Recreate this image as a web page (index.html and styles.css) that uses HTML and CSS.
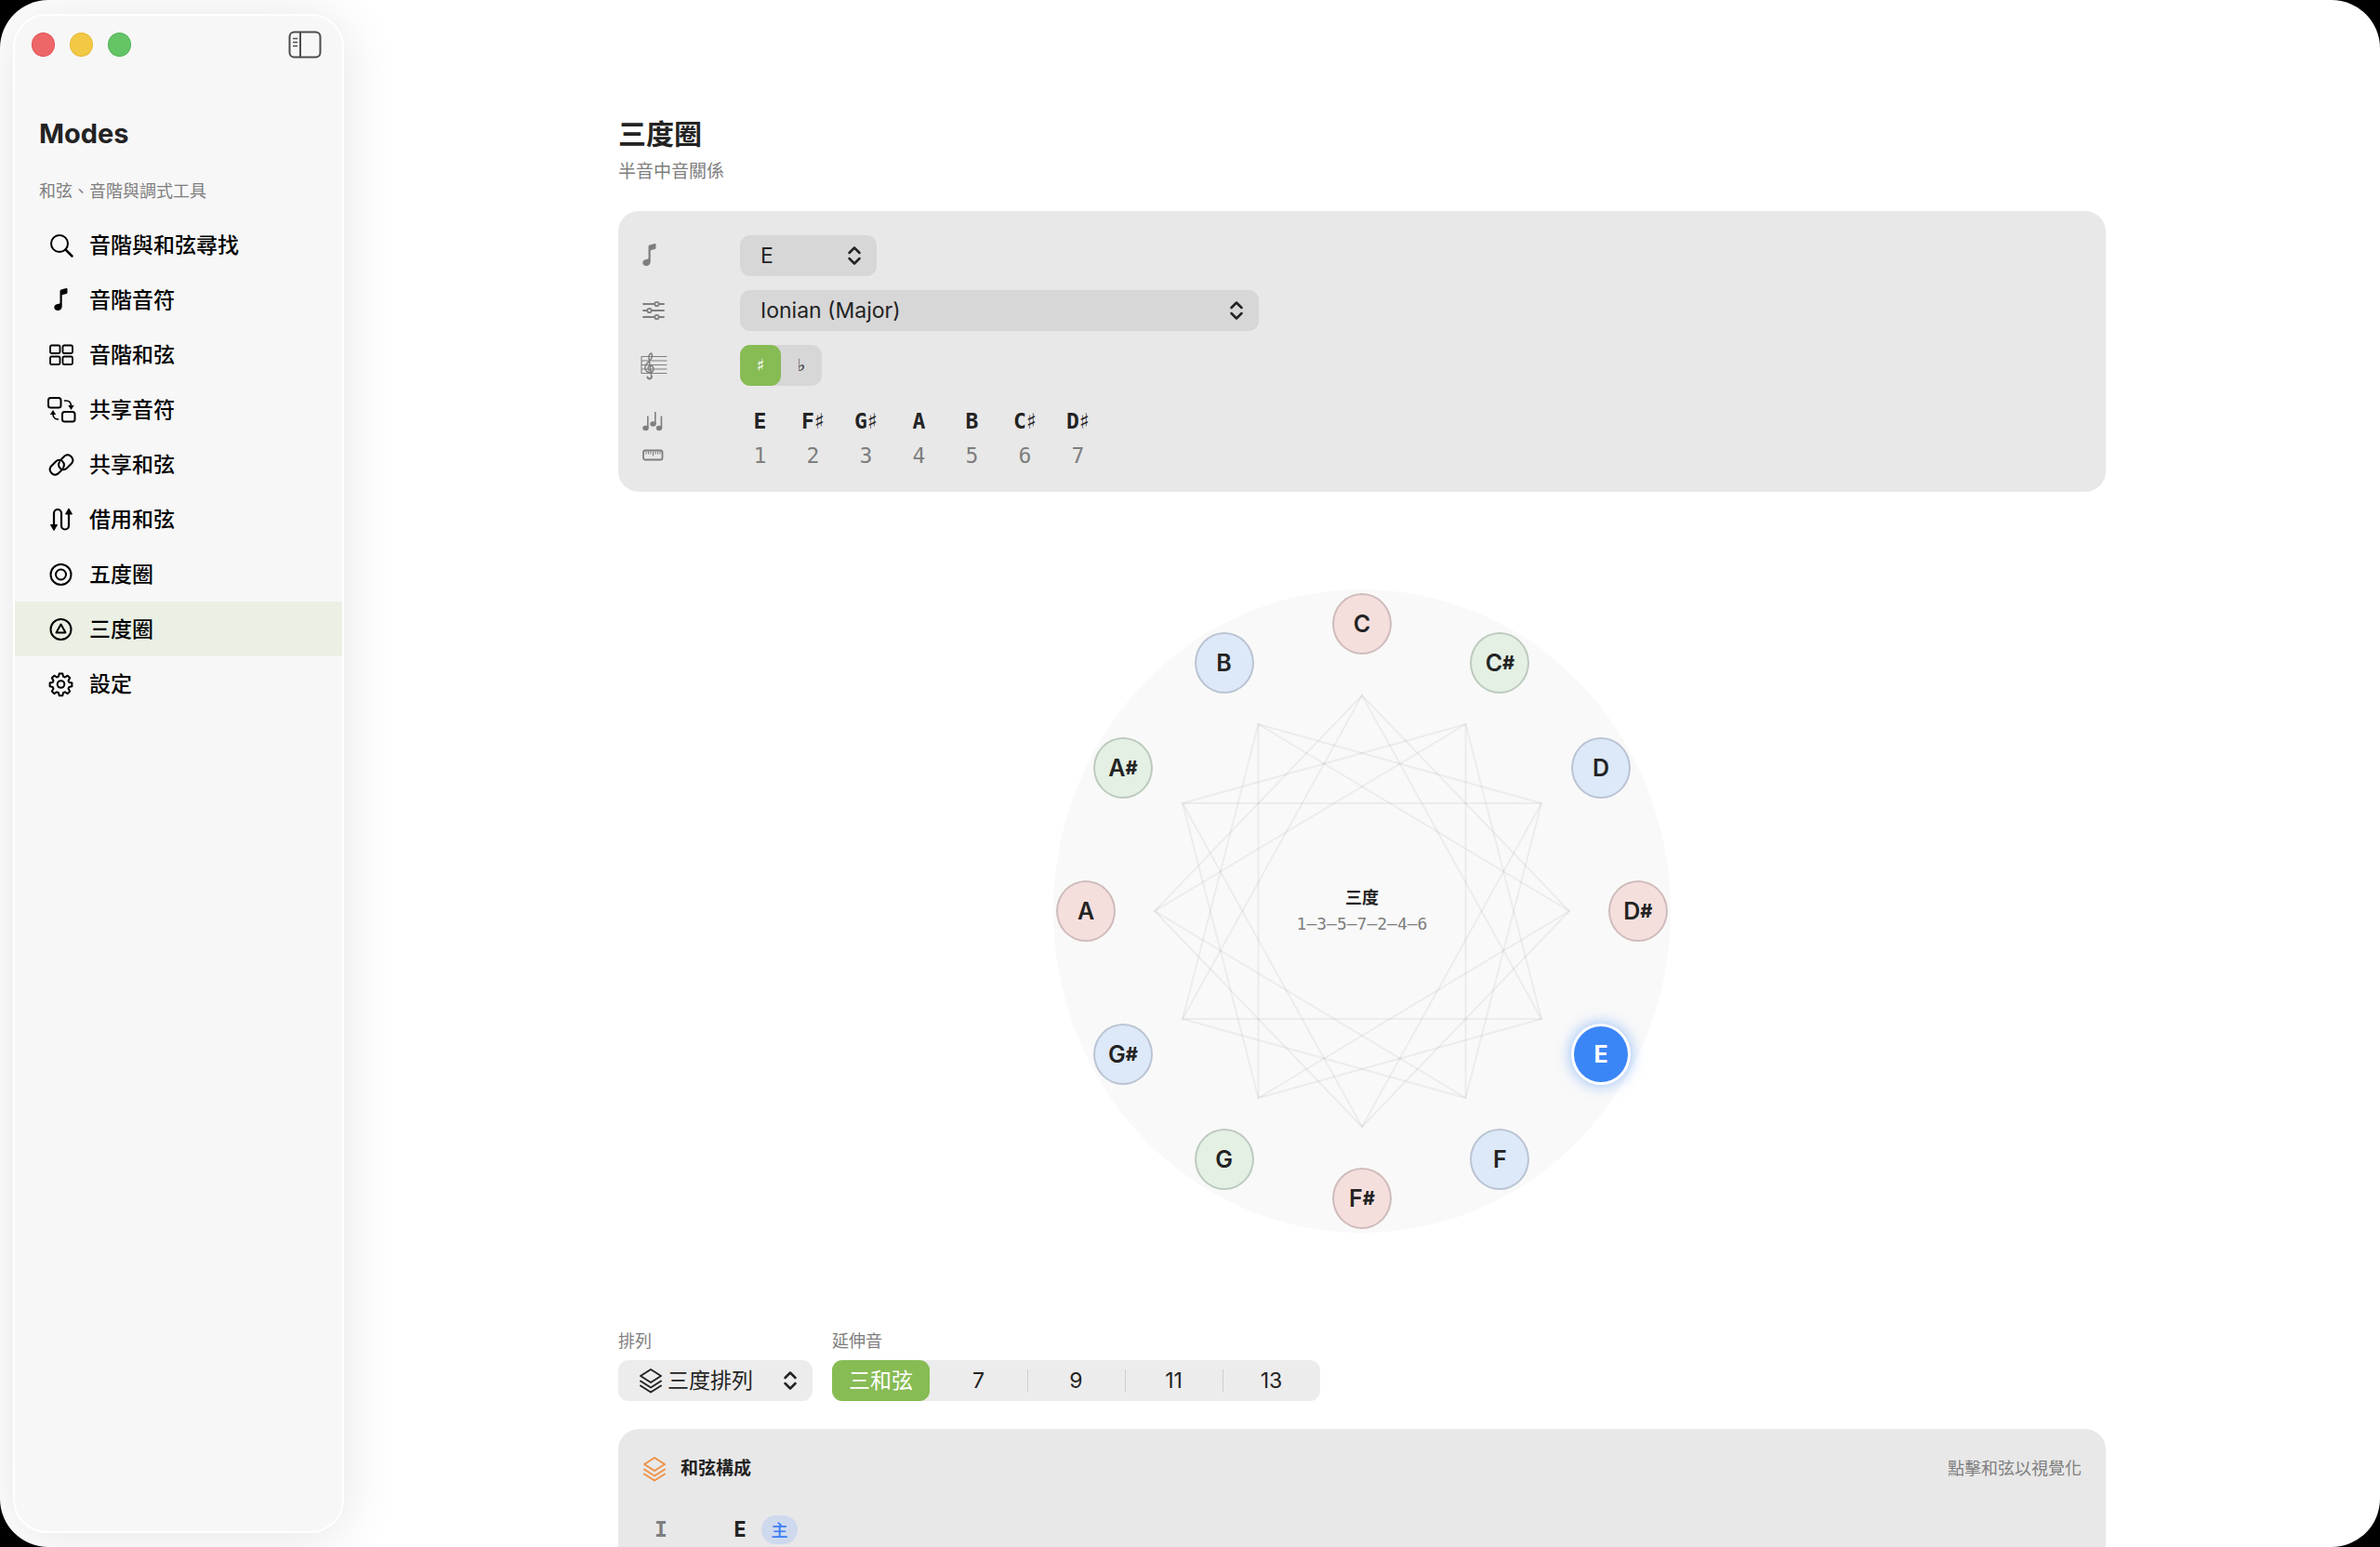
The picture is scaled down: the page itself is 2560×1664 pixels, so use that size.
FILE: index.html
```html
<!DOCTYPE html>
<html lang="zh-Hant">
<head>
<meta charset="utf-8">
<meta name="viewport" content="width=device-width, initial-scale=1">
<title>Modes</title>
<link rel="stylesheet" href="styles.css">
</head>
<body>
<svg class="sprite" aria-hidden="true">
  <symbol id="note" viewBox="0 0 32 32"><path d="M14.500 6.500c0-1 .5-1.600 1.400-1.900l5.300-1.500c.8-.2 1.300.2 1.300 1v3.300c0 .8-.4 1.300-1.100 1.500l-4.700 1.300v12.300c0 2.400-1.800 4.500-4.600 4.500-2.300 0-3.800-1.300-3.800-3.200 0-2 1.500-3.300 3.700-3.700l1.500-.3c.7-.2 1-.5 1-1.200z" fill="currentColor"/></symbol>
  <symbol id="stack" viewBox="0 0 26 28"><g fill="none" stroke="currentColor" stroke-width="2" stroke-linejoin="round" stroke-linecap="round"><path d="M13 2l11 7-11 7L2 9z"/><path d="M2 14.500l11 7 11-7M2 19.500l11 7 11-7"/></g></symbol>
  <symbol id="updown" viewBox="0 0 16 22"><path d="M2.500 8L8 2.500 13.500 8M2.500 14L8 19.500 13.500 14" fill="none" stroke="currentColor" stroke-width="2.500" stroke-linecap="round" stroke-linejoin="round"/></symbol>
</svg>
<div class="window">
  <aside class="sidebar">
    <div class="titlebar">
      <button class="light light-close" aria-label="關閉"></button>
      <button class="light light-min" aria-label="縮小"></button>
      <button class="light light-max" aria-label="放大"></button>
      <button class="toggle" aria-label="側邊欄">
        <svg width="36" height="30" viewBox="0 0 36 30" fill="none" stroke="currentColor" stroke-width="2"><rect x="1.500" y="1.500" width="33" height="27" rx="5"/><path d="M13 2v26"/><path d="M5 8.500h5M5 12.500h5M5 16.500h5" stroke-width="1.500"/></svg>
      </button>
    </div>
    <h2 class="brand">Modes</h2>
    <p class="tagline">和弦、音階與調式工具</p>
    <nav class="nav">
      <a class="nav-item" href="#search"><svg class="nav-icon" viewBox="0 0 32 32"><g fill="none" stroke="currentColor" stroke-width="2"><circle cx="14" cy="14" r="9"/><path d="M20.500 20.500l7 7" stroke-width="2.500" stroke-linecap="round"/></g></svg>音階與和弦尋找</a>
      <a class="nav-item" href="#scale-notes"><svg class="nav-icon"><use href="#note"/></svg>音階音符</a>
      <a class="nav-item" href="#scale-chords"><svg class="nav-icon" viewBox="0 0 32 32"><g fill="none" stroke="currentColor" stroke-width="1.800"><rect x="4" y="5.500" width="10.500" height="8.500" rx="1.500"/><rect x="17.500" y="5.500" width="10.500" height="8.500" rx="1.500"/><rect x="4" y="17.500" width="10.500" height="8.500" rx="1.500"/><rect x="17.500" y="17.500" width="10.500" height="8.500" rx="1.500"/></g></svg>音階和弦</a>
      <a class="nav-item" href="#shared-notes"><svg class="nav-icon" viewBox="0 0 32 32"><g fill="none" stroke="currentColor" stroke-width="2" stroke-linecap="round"><rect x="2" y="3" width="13.500" height="10.500" rx="2.500"/><rect x="17" y="18" width="13.500" height="10.500" rx="2.500"/><path d="M19.500 6h1.500c3 0 5.500 2 5.500 6M12.500 26h-.5c-3 0-5-2.500-5-6" stroke-width="1.600"/></g><path d="M23.300 11h6.400l-3.200 5zM3.800 21h6.400L7 16z" fill="currentColor"/></svg>共享音符</a>
      <a class="nav-item" href="#shared-chords"><svg class="nav-icon" viewBox="0 0 32 32"><g fill="none" stroke="currentColor" stroke-width="2" stroke-linecap="round"><path d="M14.500 11.500l5.200-5.200a5.600 5.600 0 0 1 7.500 8L22 19.500c-2.300 2.300-5.500 2-7.200.3a5.600 5.600 0 0 1-1-6.500"/><path d="M17.500 20.500l-5.200 5.200a5.600 5.600 0 0 1-7.500-8L10 12.500c2.300-2.300 5.500-2 7.200-.3a5.600 5.600 0 0 1 1 6.500"/></g></svg>共享和弦</a>
      <a class="nav-item" href="#borrowed"><svg class="nav-icon" viewBox="0 0 32 32"><path d="M8 24V9a4 4 0 0 1 8 0v13.500a4 4 0 0 0 8 0V8" fill="none" stroke="currentColor" stroke-width="2.200"/><path d="M4.500 21.500h7L8 27.500zM20.500 10h7L24 4z" fill="currentColor" stroke="currentColor" stroke-linejoin="round"/></svg>借用和弦</a>
      <a class="nav-item" href="#fifths"><svg class="nav-icon" viewBox="0 0 32 32"><g fill="none" stroke="currentColor" stroke-width="2"><circle cx="15.500" cy="16" r="11"/><circle cx="15.500" cy="16" r="5.500"/></g></svg>五度圈</a>
      <a class="nav-item is-active" href="#thirds" aria-current="page"><svg class="nav-icon" viewBox="0 0 32 32"><g fill="none" stroke="currentColor" stroke-width="2" stroke-linejoin="round"><circle cx="15.500" cy="16" r="11"/><path d="M15.500 10.500l5 9h-10z"/></g></svg>三度圈</a>
      <a class="nav-item" href="#settings"><svg class="nav-icon" viewBox="0 0 32 32"><g fill="none" stroke="currentColor" stroke-width="2" stroke-linejoin="round"><circle cx="15.500" cy="16" r="3.800"/><path d="M13.700 4.500h3.600l.7 3.200 1.900.8 2.800-1.800 2.500 2.600-1.700 2.700.8 1.900 3.100.7v3.600l-3.100.7-.8 1.900 1.700 2.700-2.500 2.600-2.800-1.800-1.900.8-.7 3.200h-3.600l-.7-3.200-1.900-.8-2.800 1.800-2.500-2.600 1.700-2.700-.8-1.900-3.100-.7v-3.600l3.100-.7.8-1.900-1.700-2.700 2.500-2.600 2.800 1.800 1.900-.8z"/></g></svg>設定</a>
    </nav>
  </aside>

  <main class="main">
    <div class="content">
      <header class="page-head">
        <h1 class="page-title">三度圈</h1>
        <p class="page-sub">半音中音關係</p>
      </header>

      <section class="card settings">
        <div class="field">
          <label class="field-icon" for="root" aria-label="根音"><svg class="icon" viewBox="4 0 32 32"><use href="#note" width="32" height="32"/></svg></label>
          <div class="select select-root">
            <select id="root"><option>E</option></select>
            <svg class="chevrons"><use href="#updown"/></svg>
          </div>
        </div>
        <div class="field">
          <label class="field-icon" for="mode" aria-label="調式"><svg class="icon" viewBox="0 0 32 32"><g fill="none" stroke="currentColor" stroke-width="1.800" stroke-linecap="round"><path d="M5 9h12M22 9h5M5 16h4M14 16h13M5 23h12M22 23h5"/><circle cx="19.500" cy="9" r="2.200"/><circle cx="11.500" cy="16" r="2.200"/><circle cx="19.500" cy="23" r="2.200"/></g></svg></label>
          <div class="select select-mode">
            <select id="mode"><option>Ionian (Major)</option></select>
            <svg class="chevrons"><use href="#updown"/></svg>
          </div>
        </div>
        <div class="field">
          <span class="field-icon"><svg class="icon" viewBox="0 0 32 32"><g fill="none" stroke="currentColor" stroke-linecap="round"><path d="M3 6.500v18M3 6.500h27M3 11h27M3 15.500h27M3 20h27M3 24.500h27" stroke-width="1.100"/><path d="M13.800 28c0 3-4.300 3.200-4.300.6" stroke-width="2"/><path d="M13.800 28L11 9c-.6-3.500 1.200-6 2.600-6 2.400 3.500-.6 7-2.800 9-2.600 2.300-4.200 4.200-4 7 .2 3.200 3 4.800 6 4.400 4.200-.8 4-6.800.2-6.800-3.200 0-3.900 3-1.900 4.600" stroke-width="1.500"/></g></svg></span>
          <div class="accidentals" role="radiogroup" aria-label="升降記號">
            <label class="seg"><input type="radio" name="accidental" checked><span>♯</span></label>
            <label class="seg"><input type="radio" name="accidental"><span>♭</span></label>
          </div>
        </div>
        <div class="scale">
          <svg class="icon" viewBox="0 0 32 32"><g fill="currentColor"><ellipse cx="7.500" cy="23.500" rx="3.200" ry="2.700"/><ellipse cx="15.500" cy="19" rx="3.200" ry="2.700"/><ellipse cx="22" cy="23.500" rx="3.200" ry="2.700"/><path d="M9 10.500h1.600v13H9zM17 6h1.600v13H17zM23.600 10.500h1.600v13h-1.600z"/></g></svg>
          <ol class="notes">
            <li>E</li><li>F<span class="sharp">♯</span></li><li>G<span class="sharp">♯</span></li><li>A</li><li>B</li><li>C<span class="sharp">♯</span></li><li>D<span class="sharp">♯</span></li>
          </ol>
          <svg class="icon" viewBox="0 0 32 32"><g fill="none" stroke="currentColor"><rect x="5" y="10.500" width="20.500" height="10" rx="2" stroke-width="1.800"/><path d="M8 11.500v3M10.500 11.500v3M13 11.500v3M15.500 11.500v5M18 11.500v3M20.500 11.500v3M23 11.500v3" stroke-width="1.100"/></g></svg>
          <ol class="notes degrees">
            <li>1</li><li>2</li><li>3</li><li>4</li><li>5</li><li>6</li><li>7</li>
          </ol>
        </div>
      </section>

      <section class="wheel" aria-label="三度圈">
        <svg class="web" viewBox="0 0 664 692" preserveAspectRatio="none">
          <g fill="none" stroke="#000" stroke-opacity=".05" stroke-width="2">
            <path d="M332 114L525 462 139 462z"/>
            <path d="M443.500 145L443.500 547 109 346z"/>
            <path d="M525 230L332 578 139 230z"/>
            <path d="M555 346L220.500 547 220.500 145z"/>
            <path d="M332 114L555 346 332 578 109 346z"/>
            <path d="M443.500 145L525 462 220.500 547 139 230z"/>
            <path d="M525 230L443.500 547 139 462 220.500 145z"/>
          </g>
        </svg>
        <div class="hub">
          <strong>三度</strong>
          <span class="order">1–3–5–7–2–4–6</span>
        </div>
        <button class="node red" style="--step:0">C</button>
        <button class="node green" style="--step:1">C<span class="hash">#</span></button>
        <button class="node blue" style="--step:2">D</button>
        <button class="node red" style="--step:3">D<span class="hash">#</span></button>
        <button class="node active" style="--step:4">E</button>
        <button class="node blue" style="--step:5">F</button>
        <button class="node red" style="--step:6">F<span class="hash">#</span></button>
        <button class="node green" style="--step:7">G</button>
        <button class="node blue" style="--step:8">G<span class="hash">#</span></button>
        <button class="node red" style="--step:9">A</button>
        <button class="node green" style="--step:10">A<span class="hash">#</span></button>
        <button class="node blue" style="--step:11">B</button>
      </section>

      <section class="options">
        <div class="option">
          <label class="option-label" for="stacking">排列</label>
          <div class="select select-stack">
            <svg class="stack-icon"><use href="#stack"/></svg>
            <select id="stacking"><option>三度排列</option></select>
            <svg class="chevrons"><use href="#updown"/></svg>
          </div>
        </div>
        <div class="option">
          <span class="option-label" id="ext-label">延伸音</span>
          <div class="extensions" role="radiogroup" aria-labelledby="ext-label">
            <label class="seg"><input type="radio" name="extension" checked><span>三和弦</span></label>
            <label class="seg"><input type="radio" name="extension"><span>7</span></label>
            <label class="seg"><input type="radio" name="extension"><span>9</span></label>
            <label class="seg"><input type="radio" name="extension"><span>11</span></label>
            <label class="seg"><input type="radio" name="extension"><span>13</span></label>
          </div>
        </div>
      </section>

      <section class="card chords">
        <header class="chords-head">
          <svg class="stack-icon accent"><use href="#stack"/></svg>
          <h2 class="chords-title">和弦構成</h2>
          <span class="hint">點擊和弦以視覺化</span>
        </header>
        <div class="chord-row">
          <span class="numeral">I</span>
          <span class="chord-name">E</span>
          <span class="badge">主</span>
        </div>
      </section>
    </div>
  </main>
</div>
</body>
</html>
```
FILE: styles.css
```css
* { box-sizing: border-box; }

:root {
  --ink: #232323;
  --muted: #7e7e7e;
  --green: #87bb54;
  --panel: #e8e8e8;
  --field: #d7d7d7;
  --light-field: #ececec;
  --mono: "DejaVu Sans Mono", "Liberation Mono", monospace;
}

body {
  margin: 0;
  background: #000;
  color: var(--ink);
  font: 400 23px/28px Inter, "Noto Sans CJK TC", sans-serif;
}

h1, h2, p, ol { margin: 0; padding: 0; }
ol { list-style: none; }

button, select {
  margin: 0;
  padding: 0;
  border: 0;
  background: none;
  color: inherit;
  font: inherit;
}

.sprite { display: none; }

.window {
  display: flex;
  height: 100vh;
  overflow: hidden;
  border-radius: 52px;
  background: #fff;
}

/* Sidebar */

.sidebar {
  flex: none;
  width: 356px;
  margin: 15px 0 15px 14px;
  border: 2px solid #fff;
  border-radius: 36px;
  background: #f7f7f7;
  box-shadow: 0 4px 60px rgba(0, 0, 0, .11);
}

.titlebar {
  display: flex;
  align-items: center;
  gap: 16px;
  height: 62px;
  padding: 0 22px 0 18px;
}

.light {
  width: 25px;
  height: 26px;
  border: 1px solid;
  border-radius: 50%;
}

.light-close { background: #ee6768; border-color: #e05052; }
.light-min { background: #f2c944; border-color: #e6b932; }
.light-max { background: #65c466; border-color: #4fb553; }

.toggle {
  margin-left: auto;
  height: 30px;
  color: #4c4c4c;
}

.toggle svg { display: block; }

.brand {
  padding: 45px 26px 0;
  font-size: 29px;
  line-height: 40px;
  font-weight: 700;
}

.tagline {
  padding: 30px 26px 16px;
  color: var(--muted);
  font-size: 18px;
  line-height: 24px;
}

.nav-item {
  display: flex;
  align-items: center;
  gap: 14px;
  height: 59px;
  padding-left: 34px;
  color: #000;
  font-weight: 500;
  text-decoration: none;
}

.nav-item.is-active { background: #eaf0e4; }

.nav-icon, .icon { width: 32px; height: 32px; flex: none; }

/* Main column */

.main {
  flex: 1;
  min-width: 0;
  padding: 0 40px;
}

.content {
  max-width: 1600px;
  margin: 0 auto;
  padding-top: 122px;
}

.page-title {
  font-size: 30px;
  line-height: 44px;
  font-weight: 700;
}

.page-sub {
  padding: 5px 0 28px;
  color: var(--muted);
  font-size: 19px;
  line-height: 28px;
}

.card {
  border-radius: 22px;
  background: var(--panel);
}

.settings {
  display: flex;
  flex-direction: column;
  gap: 15px;
  padding: 26px 22px 23px;
}

.field { display: flex; align-items: center; height: 44px; }

.field-icon {
  display: flex;
  width: 109px;
  color: var(--muted);
}

.select { position: relative; height: 44px; }

.select select {
  width: 100%;
  height: 100%;
  padding: 0 22px;
  border-radius: 11px;
  background: var(--field);
  appearance: none;
}

.chevrons {
  position: absolute;
  top: 11px;
  right: 16px;
  width: 16px;
  height: 22px;
  pointer-events: none;
}

.select-root { width: 147px; }
.select-mode { width: 558px; }

.accidentals, .extensions {
  display: flex;
  border-radius: 11px;
}

.accidentals {
  background: var(--field);
  font: 700 18px/28px "DejaVu Sans", sans-serif;
}

.extensions { background: var(--light-field); }

.seg { position: relative; display: block; height: 44px; }
.accidentals .seg { width: 44px; }
.extensions .seg { width: 105px; }

.seg input {
  position: absolute;
  inset: 0;
  margin: 0;
  opacity: 0;
}

.seg span {
  display: flex;
  align-items: center;
  justify-content: center;
  height: 44px;
  border-radius: 11px;
}

.seg input:checked + span { background: var(--green); color: #fff; }

.extensions .seg:nth-child(n + 3)::before {
  content: "";
  position: absolute;
  left: 0;
  top: 10px;
  height: 24px;
  border-left: 1px solid #cfcfcf;
}

.scale {
  display: grid;
  grid-template-columns: 102px 1fr;
  align-items: center;
  row-gap: 5px;
  padding: 7px 0 0;
  color: var(--muted);
}

.notes {
  display: flex;
  color: var(--ink);
  font: 700 23px/32px var(--mono);
}

.notes li { width: 57px; height: 32px; text-align: center; }
.notes .sharp { font-family: "DejaVu Sans", sans-serif; font-weight: 400; }

.degrees { color: var(--muted); font-weight: 400; }

/* Circle of thirds */

.wheel {
  position: relative;
  width: 664px;
  height: 692px;
  margin: 105px auto 104px;
  border-radius: 50%;
  background: #f9f9f9;
}

.web {
  display: block;
  width: 100%;
  height: 100%;
}

.hub {
  position: absolute;
  inset: 0;
  display: flex;
  flex-direction: column;
  align-items: center;
  justify-content: center;
  font-size: 18px;
}

.order { color: var(--muted); font-family: var(--mono); }

.node {
  position: absolute;
  left: calc(50% + 44.7% * sin(var(--step) * 30deg));
  top: calc(50% - 44.6% * cos(var(--step) * 30deg));
  width: 64px;
  height: 66px;
  margin: -33px 0 0 -32px;
  border: 2px solid;
  border-radius: 50%;
  font-size: 25px;
  font-weight: 600;
}

.hash { font-size: 20px; font-weight: 800; vertical-align: 2px; }

.red { background: #f5dfdd; border-color: #cfbcbb; }
.blue { background: #dde8f8; border-color: #bac4d3; }
.green { background: #e3f0e3; border-color: #bdcabe; }

.active {
  border: 3px solid #fff;
  background: #3b86f7;
  color: #fff;
  font-weight: 700;
  box-shadow: 0 0 16px rgba(59, 134, 247, .55);
}

/* Options under the wheel */

.options { display: flex; gap: 21px; }

.option-label {
  display: block;
  padding-bottom: 7px;
  color: var(--muted);
  font-size: 18px;
  line-height: 26px;
}

.select-stack { width: 209px; }

.select-stack select {
  padding-left: 53px;
  background: var(--light-field);
}

.stack-icon { width: 26px; height: 28px; flex: none; }

.select-stack .stack-icon {
  position: absolute;
  left: 22px;
  top: 8px;
  pointer-events: none;
}

/* Chord list */

.chords { margin-top: 30px; padding: 26px; }

.chords-head {
  display: flex;
  align-items: center;
  gap: 15px;
  height: 34px;
}

.accent { color: #ee9145; }

.chords-title { font-size: 19px; font-weight: 700; }

.hint { margin-left: auto; color: var(--muted); font-size: 18px; }

.chord-row {
  display: flex;
  align-items: center;
  height: 66px;
  margin-top: 15px;
  font: 700 23px/32px var(--mono);
}

.numeral { width: 40px; text-align: center; color: var(--muted); }
.chord-name { width: 30px; margin-left: 50px; text-align: center; }

.badge {
  width: 39px;
  margin-left: 8px;
  border-radius: 16px;
  background: #ced9ee;
  color: #3b7ff5;
  font: 500 18px/31px "Noto Sans CJK TC", sans-serif;
  text-align: center;
}
```
